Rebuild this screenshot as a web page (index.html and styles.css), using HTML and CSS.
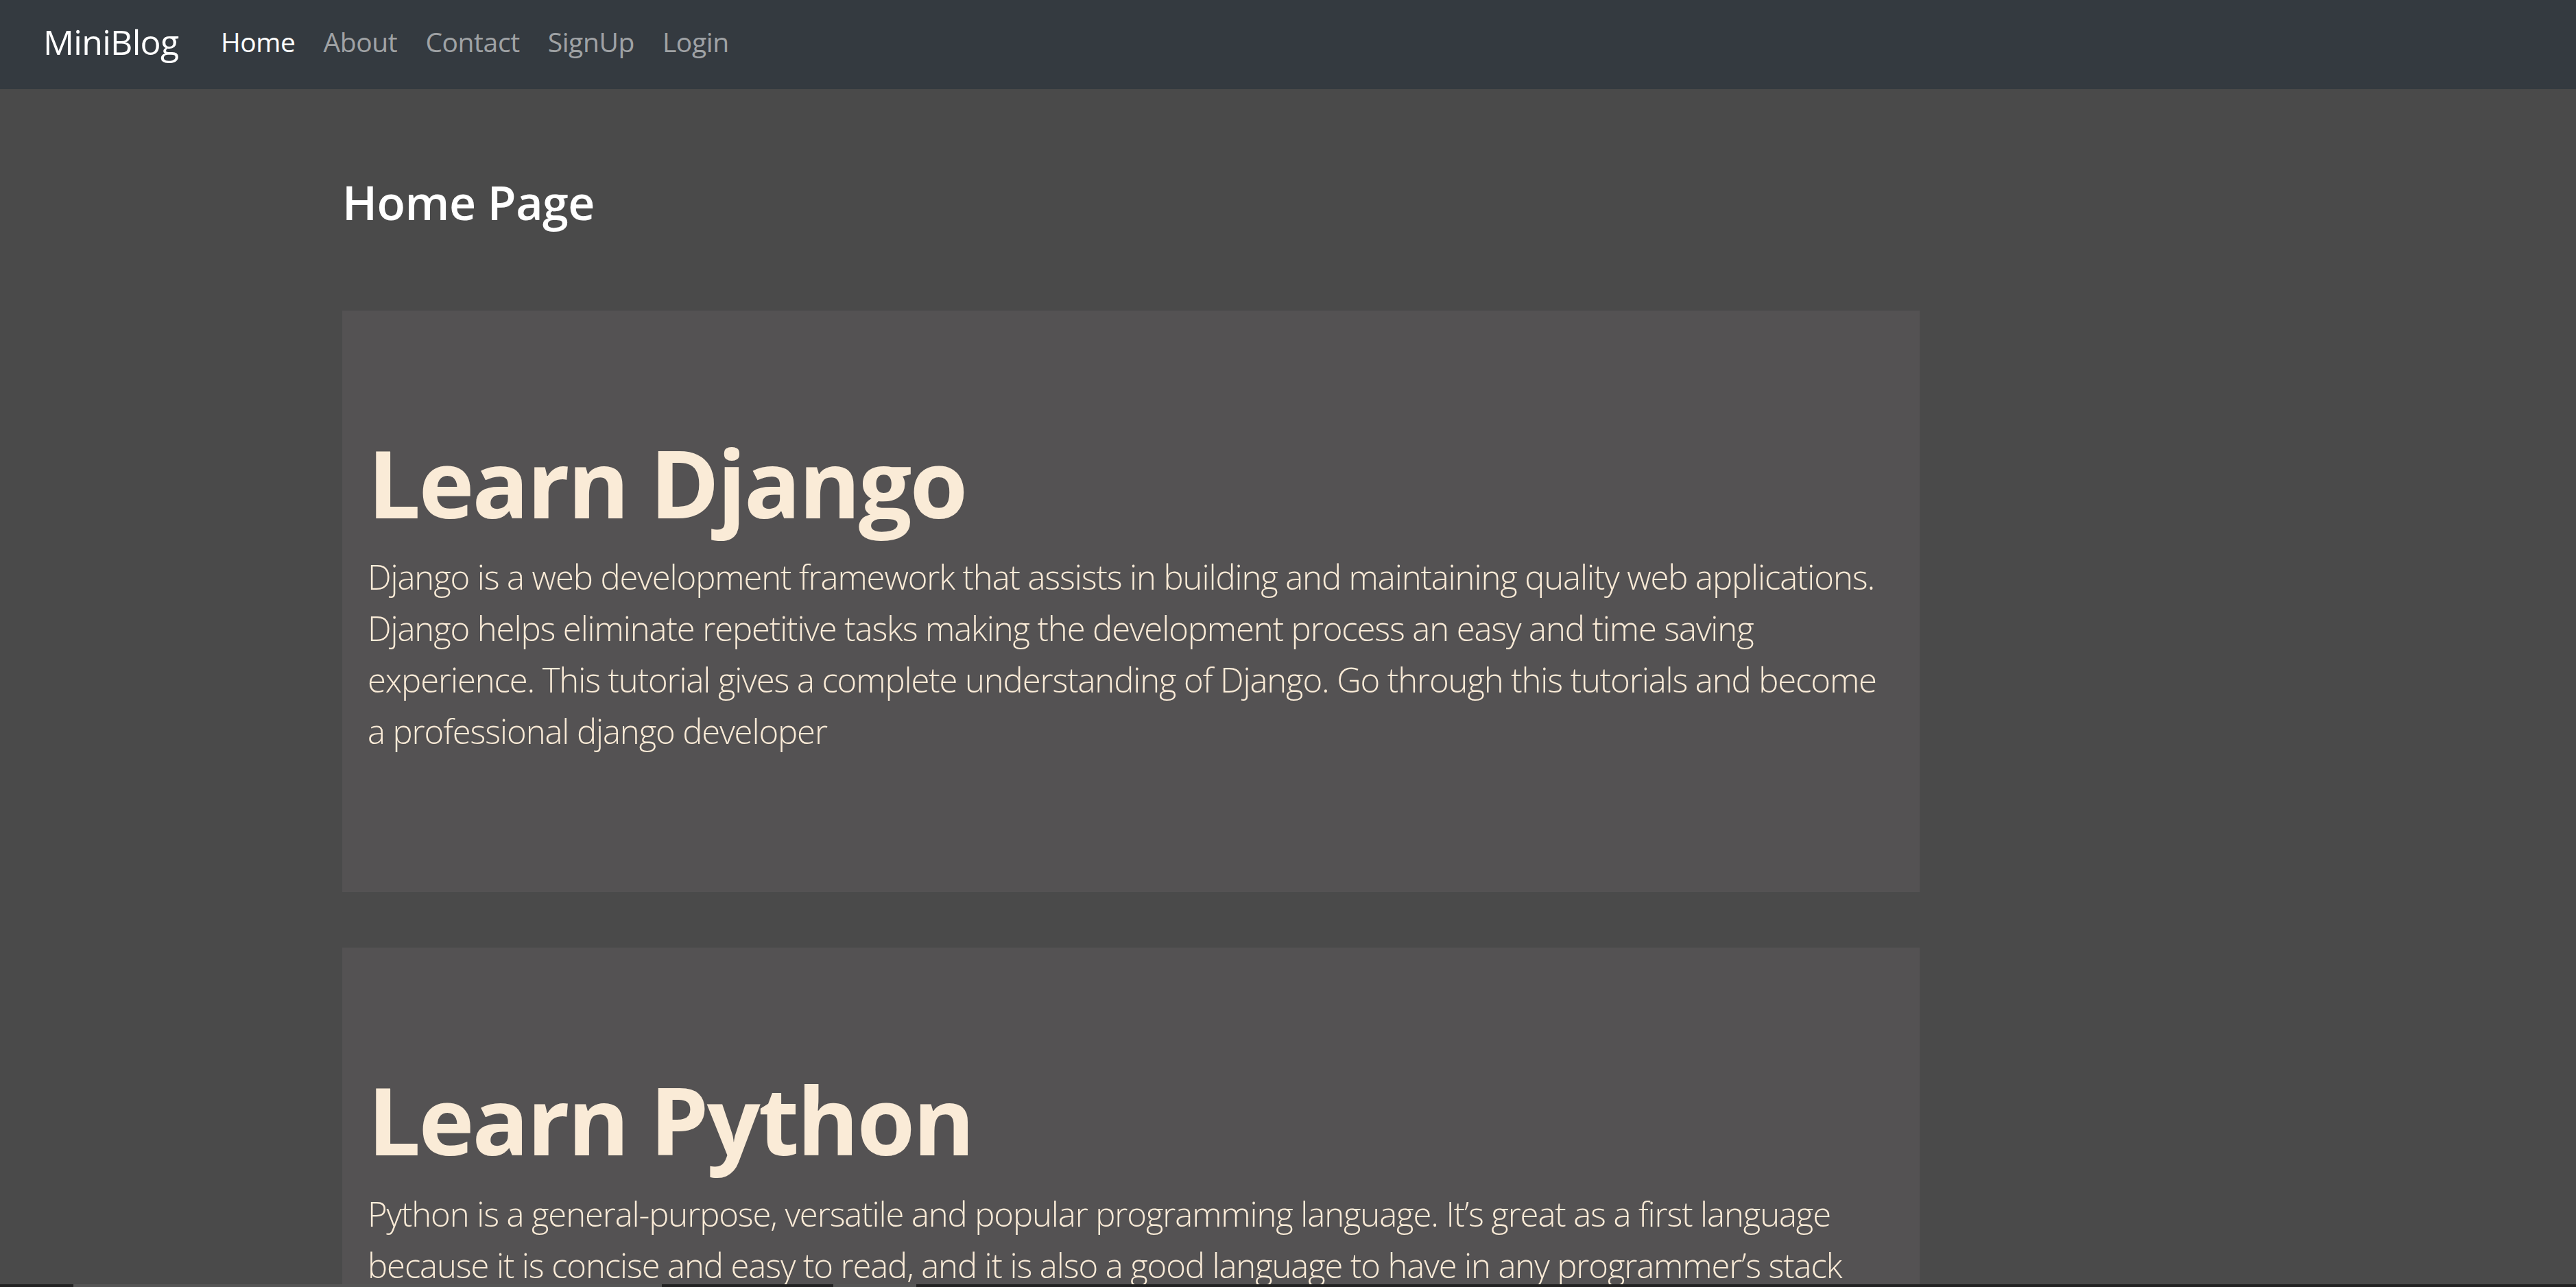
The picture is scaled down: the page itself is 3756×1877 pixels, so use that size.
FILE: index.html
```html
<!DOCTYPE html>
<html lang="en">
<head>
<meta charset="utf-8">
<title>MiniBlog</title>
<link rel="stylesheet" href="styles.css">
</head>
<body>
<nav class="navbar">
  <a class="brand" href="#">MiniBlog</a>
  <ul class="nav">
    <li><a class="nav-link active" href="#">Home</a></li>
    <li><a class="nav-link" href="#">About</a></li>
    <li><a class="nav-link" href="#">Contact</a></li>
    <li><a class="nav-link" href="#">SignUp</a></li>
    <li><a class="nav-link" href="#">Login</a></li>
  </ul>
</nav>
<main class="container">
  <h3 class="page-title">Home Page</h3>
  <section class="post">
    <h1 class="post-title">Learn Django</h1>
    <p class="post-body">Django is a web development framework that assists in building and maintaining quality web applications.<br>Django helps eliminate repetitive tasks making the development process an easy and time saving<br>experience. This tutorial gives a complete understanding of Django. Go through this tutorials and become<br>a professional django developer</p>
  </section>
  <section class="post">
    <h1 class="post-title">Learn Python</h1>
    <p class="post-body">Python is a general-purpose, versatile and popular programming language. It’s great as a first language<br>because it is concise and easy to read, and it is also a good language to have in any programmer’s stack</p>
  </section>
</main>
<div class="edge"><span class="seg seg-a"></span><span class="seg seg-b"></span></div>
</body>
</html>
```
FILE: styles.css
```css
html, body { margin: 0; padding: 0; }
body {
  background: #4a4a4a;
  font-family: "Open Sans", "Noto Sans", sans-serif;
  color: #faebd7;
}
.navbar {
  box-sizing: border-box;
  height: 130px;
  padding: 0 0 7px 63px;
  background: #343a40;
  display: flex;
  align-items: center;
}
.brand {
  color: #fff;
  text-decoration: none;
  font-size: 50px;
  line-height: 1.5;
  letter-spacing: -0.7px;
  margin-right: 41px;
}
.nav { display: flex; list-style: none; margin: 0; padding: 0; }
.nav-link {
  display: block;
  padding: 0 20.5px;
  font-size: 39px;
  line-height: 1.5;
  letter-spacing: -0.4px;
  color: rgba(255,255,255,.55);
  text-decoration: none;
}
.nav-link.active { color: #fff; }
.container { width: 2300px; margin-left: 499px; }
.page-title {
  margin: 124px 0 117px;
  font-size: 68px;
  line-height: 1.2;
  letter-spacing: -0.5px;
  font-weight: 600;
  color: #fff;
}
.post {
  background: #545253;
  padding: 168px 37px 157px;
  margin-bottom: 81px;
}
.post-title {
  margin: 0 0 19px;
  font-size: 137px;
  line-height: 1.2;
  letter-spacing: -2.9px;
  font-weight: 700;
}
.post-body {
  margin: 0 0 40px;
  font-size: 49px;
  line-height: 75px;
  letter-spacing: -1.1px;
  font-weight: 300;
  white-space: nowrap;
}
.edge {
  position: fixed; left: 0; right: 0; bottom: 0; height: 4px;
  background: #222;
}
.seg { position: absolute; top: 0; bottom: 0; background: #555; }
.seg-a { left: 107px; width: 858px; }
.seg-b { left: 1215px; width: 121px; }
```
